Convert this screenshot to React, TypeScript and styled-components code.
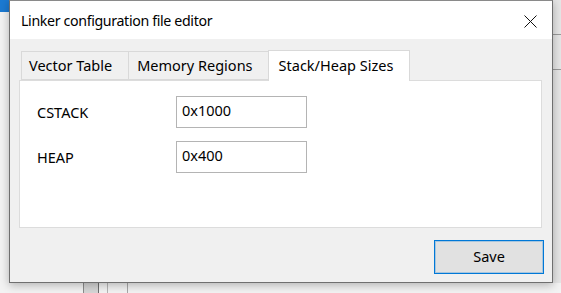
import React from "react";
import styled, { createGlobalStyle } from "styled-components";

const GlobalStyle = createGlobalStyle`
  html, body {
    margin: 0;
    padding: 0;
  }
  body {
    font-family: "Noto Sans", "Open Sans", sans-serif;
    color: #000;
  }
`;

const Desktop = styled.div`
  width: 561px;
  height: 293px;
  overflow: hidden;
  background:
    linear-gradient(#1c7ad2, #1c7ad2) 0 0 / 9px 12px no-repeat,
    linear-gradient(#9a9a9a, #9a9a9a) 553px 34px / 8px 1px no-repeat,
    linear-gradient(#9a9a9a, #9a9a9a) 553px 69px / 8px 1px no-repeat,
    linear-gradient(#8c8c8c, #8c8c8c) 83px 283px / 1px 10px no-repeat,
    linear-gradient(#d6d6d6, #d6d6d6) 84px 283px / 14px 10px no-repeat,
    linear-gradient(#6e6e6e, #6e6e6e) 97px 283px / 2px 10px no-repeat,
    linear-gradient(#b5b5b5, #b5b5b5) 107px 283px / 1px 10px no-repeat,
    linear-gradient(#a8a8a8, #a8a8a8) 127px 283px / 1px 10px no-repeat,
    linear-gradient(#e6e6e6, #e6e6e6) 553px 0 / 8px 283px no-repeat,
    #f3f3f3;
`;

const Window = styled.div`
  margin-left: 9px;
  width: 544px;
  height: 283px;
  box-sizing: border-box;
  border: 1px solid #6f6f6f;
  border-top-color: #8a8a8a;
  background: #f0f0f0;
  display: flex;
  flex-direction: column;
  box-shadow: 0 2px 9px rgba(0, 0, 0, 0.28);
`;

const TitleBar = styled.div`
  height: 38px;
  flex: none;
  background: #fff;
  display: flex;
  align-items: center;
  justify-content: space-between;
  padding: 0 15px 0 11px;
`;

const Title = styled.span`
  font-size: 14.2px;
  letter-spacing: -0.35px;
  line-height: 1;
  margin-top: 2px;
`;

const CloseIcon = styled.svg`
  width: 13px;
  height: 13px;
  margin-top: 2px;
`;

const Body = styled.div`
  flex: 1;
  display: flex;
  flex-direction: column;
  padding: 10px 10px 0 9px;
`;

const TabList = styled.div`
  display: flex;
  align-items: flex-end;
  height: 31px;
  padding-left: 2px;
  position: relative;
  z-index: 1;
`;

const Tab = styled.div<{ $active?: boolean }>`
  box-sizing: border-box;
  height: ${({ $active }) => ($active ? "31px" : "29px")};
  padding: ${({ $active }) => ($active ? "3px 16px 0 10px" : "2px 16px 0 8px")};
  margin-left: ${({ $active }) => ($active ? "-2px" : "-1px")};
  margin-bottom: ${({ $active }) => ($active ? "-1px" : "0")};
  border: 1px solid #d9d9d9;
  border-bottom: ${({ $active }) => ($active ? "none" : "1px solid #d9d9d9")};
  background: ${({ $active }) => ($active ? "#fff" : "#f0f0f0")};
  font-size: 14.5px;
  line-height: 22px;
  white-space: nowrap;
  &:first-child {
    margin-left: 0;
    padding-left: 7px;
  }
`;

const Panel = styled.div`
  height: 148px;
  box-sizing: border-box;
  background: #fff;
  border: 1px solid #dcdcdc;
  padding: 15px 0 0 17px;
  display: grid;
  grid-template-columns: 139px 131px;
  grid-auto-rows: 32px;
  row-gap: 13px;
  align-items: center;
  align-content: start;
`;

const Label = styled.span`
  font-size: 14.5px;
`;

const Field = styled.div`
  box-sizing: border-box;
  height: 32px;
  border: 1px solid #b4b4b4;
  padding: 3px 0 0 5px;
  font-size: 14.5px;
  line-height: 20px;
`;

const Footer = styled.div`
  display: flex;
  justify-content: flex-end;
  margin: 12px -2px 0 0;
`;

const Button = styled.button`
  width: 110px;
  height: 34px;
  box-sizing: border-box;
  border: 1px solid #0078d7;
  box-shadow: inset 0 0 0 1px rgba(0, 120, 215, 0.25);
  background: #e1e1e1;
  font-family: inherit;
  font-size: 14.5px;
  line-height: 1;
  color: #000;
  padding: 0 0 2px;
`;

const stackSizes = [
  { name: "CSTACK", value: "0x1000" },
  { name: "HEAP", value: "0x400" },
];

const App = () => {
  return (
    <Desktop>
      <GlobalStyle />
      <Window>
        <TitleBar>
          <Title>Linker configuration file editor</Title>
          <CloseIcon viewBox="0 0 13 13">
            <path d="M0.5 0.5 L12.5 12.5 M12.5 0.5 L0.5 12.5" stroke="#111" strokeWidth="1" />
          </CloseIcon>
        </TitleBar>
        <Body>
          <TabList>
            <Tab>Vector Table</Tab>
            <Tab>Memory Regions</Tab>
            <Tab $active>Stack/Heap Sizes</Tab>
          </TabList>
          <Panel>
            {stackSizes.map((s) => (
              <React.Fragment key={s.name}>
                <Label>{s.name}</Label>
                <Field>{s.value}</Field>
              </React.Fragment>
            ))}
          </Panel>
          <Footer>
            <Button>Save</Button>
          </Footer>
        </Body>
      </Window>
    </Desktop>
  );
};

export default App;
